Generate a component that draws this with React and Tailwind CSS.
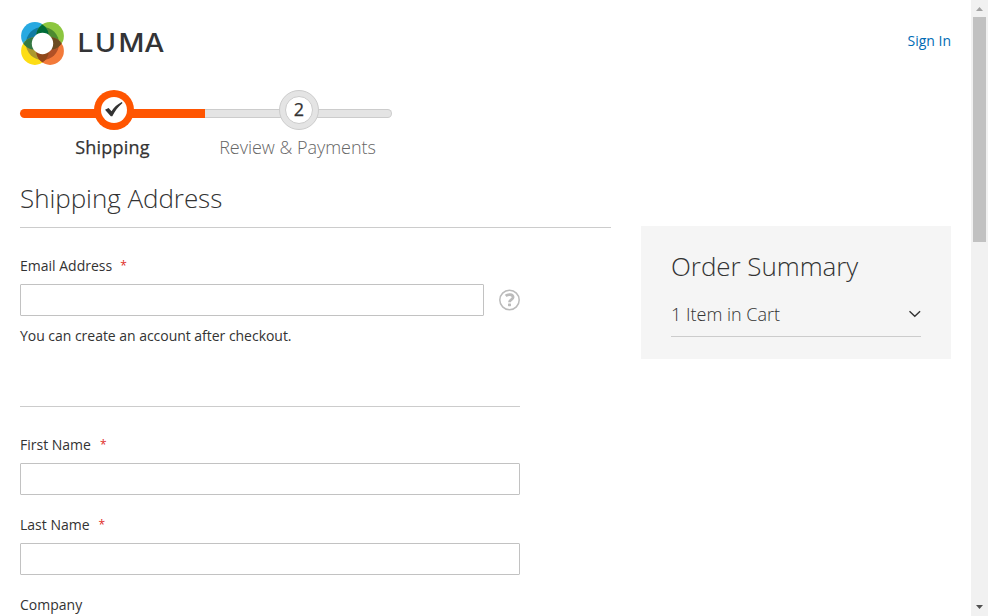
function Logo() {
  return (
    <svg width="148" height="46" viewBox="20 20 148 46" className="block">
      <defs>
        <clipPath id="tl"><circle cx="34.9" cy="35.9" r="13.8" /></clipPath>
        <clipPath id="tr"><circle cx="50.1" cy="35.9" r="13.8" /></clipPath>
        <clipPath id="bl"><circle cx="34.9" cy="51.1" r="13.8" /></clipPath>
        <clipPath id="br"><circle cx="50.1" cy="51.1" r="13.8" /></clipPath>
      </defs>
      <circle cx="34.9" cy="35.9" r="13.8" fill="#27a9e1" />
      <circle cx="50.1" cy="35.9" r="13.8" fill="#8cc63f" />
      <circle cx="34.9" cy="51.1" r="13.8" fill="#fddd14" />
      <circle cx="50.1" cy="51.1" r="13.8" fill="#f37a3a" />
      <circle cx="42.5" cy="43.5" r="16.6" fill="#117ba3" clipPath="url(#tl)" />
      <circle cx="42.5" cy="43.5" r="16.6" fill="#4d8a30" clipPath="url(#tr)" />
      <circle cx="42.5" cy="43.5" r="16.6" fill="#ac982f" clipPath="url(#bl)" />
      <circle cx="42.5" cy="43.5" r="16.6" fill="#b05026" clipPath="url(#br)" />
      <circle cx="34.9" cy="35.9" r="13.8" fill="#006b38" clipPath="url(#tr)" />
      <circle cx="34.9" cy="51.1" r="13.8" fill="#357843" clipPath="url(#tl)" />
      <circle cx="50.1" cy="51.1" r="13.8" fill="#6b4a20" clipPath="url(#tr)" />
      <circle cx="34.9" cy="51.1" r="13.8" fill="#904719" clipPath="url(#br)" />
      <circle cx="42.5" cy="43.5" r="10.7" fill="#fff" />
      <text transform="scale(1.12 1)" x="69.2 84.8 105.7 128.8" y="52.5" fontFamily="Inter, sans-serif" fontWeight="500" fontSize="25.3" fill="#333436">LUMA</text>
    </svg>
  );
}

function Field({ label, required }) {
  return (
    <div className="mb-5 h-[60px]">
      <label className="flex h-5 items-center leading-5">
        {label}
        {required && <span className="ml-[9px] text-[12px] text-[#e02b27]">*</span>}
      </label>
      <input className="mt-2 block h-8 w-[500px] rounded-[1px] border border-[#c2c2c2] bg-white px-[9px] outline-none" />
    </div>
  );
}

function Progress() {
  return (
    <ul className="mt-6 flex h-[70px] text-[18px] leading-[25px]">
      <li className="relative w-[185px] pt-[19px] text-center font-semibold text-[#333]">
        <div className="h-[9px] rounded-l-[6px] bg-[#ff5501]" />
        <div className="absolute top-0 left-[74px] flex size-10 items-center justify-center rounded-full bg-[#ff5501]">
          <div className="flex size-[26px] items-center justify-center rounded-full bg-white">
            <svg width="18" height="16" viewBox="0 0 18 16">
              <path d="M0 7.8 3.6 6.1 6.5 9.3C9 5.5 12 2.3 16.8 0L17.5 1.1C13 4.9 10 9.1 7.3 14.3H5.8Z" fill="#333" />
            </svg>
          </div>
        </div>
        <span className="mt-[17px] block font-medium tracking-[0.22px] [-webkit-text-stroke:0.25px_#333]">Shipping</span>
      </li>
      <li className="relative w-[187px] pt-[19px] text-center font-light text-[#666]">
        <div className="h-[9px] rounded-r-[6px] border border-l-0 border-[#ccc] bg-[#e4e4e4]" />
        <div className="absolute top-0 left-[74px] flex size-10 items-center justify-center rounded-full border border-[#ccc] bg-[#e4e4e4]">
          <div className="flex size-7 items-center justify-center rounded-full border border-[#ccc] bg-white pb-px font-medium text-[#333] [-webkit-text-stroke:0.25px_#333]">2</div>
        </div>
        <span className="mt-[17px] mr-[2px] block tracking-[-0.03px]">Review &amp; Payments</span>
      </li>
    </ul>
  );
}

function Scrollbar() {
  return (
    <div className="flex w-[17px] shrink-0 flex-col items-center bg-[#f1f1f1]">
      <svg width="17" height="17" viewBox="0 0 17 17"><path d="M5 11h7L8.5 7Z" fill="#a3a3a3" /></svg>
      <div className="h-[225px] w-[13px] bg-[#c1c1c1]" />
      <svg className="mt-auto" width="17" height="17" viewBox="0 0 17 17"><path d="M5 6h7L8.5 10Z" fill="#505050" /></svg>
    </div>
  );
}

export default function App() {
  return (
    <div className="flex h-[616px] w-[988px] overflow-hidden bg-white font-['Open_Sans',sans-serif] text-[14px] text-[#333]">
      <div className="min-w-0 flex-1 px-5 pt-5">
        <header className="flex h-[46px] items-start justify-between">
          <Logo />
          <a href="#" className="mt-[11px] leading-5 text-[#006bb4]">Sign In</a>
        </header>
        <Progress />
        <div className="flex items-start gap-[30px]">
          <main className="w-[591px]">
            <h1 className="mt-5 h-[48px] border-b border-[#ccc] text-[26px] leading-[36px] font-light tracking-[-0.05px]">Shipping Address</h1>
            <div className="mt-7">
              <label className="flex h-5 items-center leading-5">
                Email Address<span className="ml-2 text-[12px] text-[#e02b27]">*</span>
              </label>
              <div className="mt-2 flex items-center gap-[15px]">
                <input className="block h-8 w-[464px] rounded-[1px] border border-[#c2c2c2] bg-white px-[9px] outline-none" />
                <svg width="21" height="22" viewBox="0 0 21 22">
                  <circle cx="10.5" cy="11" r="9.7" fill="none" stroke="#bbb" strokeWidth="1.5" />
                  <path d="M6.7 6.9C8.6 5.2 14.1 4.7 14.1 8.3C14.1 10.7 10.5 10.6 10.5 13.2" fill="none" stroke="#bbb" strokeWidth="2.8" />
                  <rect x="9" y="14.4" width="3" height="2.8" rx=".6" fill="#bbb" />
                </svg>
              </div>
              <p className="mt-[10px] leading-5 tracking-[-0.03px]">You can create an account after checkout.</p>
            </div>
            <hr className="mt-[60px] mb-7 w-[500px] border-[#ccc]" />
            <Field label="First Name" required />
            <Field label="Last Name" required />
            <Field label="Company" />
          </main>
          <aside className="mt-[66px] h-[133px] w-[310px] bg-[#f5f5f5] px-[30px] pt-[22px]">
            <h2 className="text-[26px] leading-[36px] font-light tracking-[-0.05px]">Order Summary</h2>
            <div className="mt-[17px] flex h-[36px] items-start justify-between border-b border-[#ccc] text-[18px] leading-[26px] font-light">
              1 Item in Cart
              <svg className="mt-2" width="13" height="10" viewBox="0 0 13 10"><path d="m1.5 2.2 5.3 5L12.1 2.2" fill="none" stroke="#333" strokeWidth="1.4" /></svg>
            </div>
          </aside>
        </div>
      </div>
      <Scrollbar />
    </div>
  );
}
